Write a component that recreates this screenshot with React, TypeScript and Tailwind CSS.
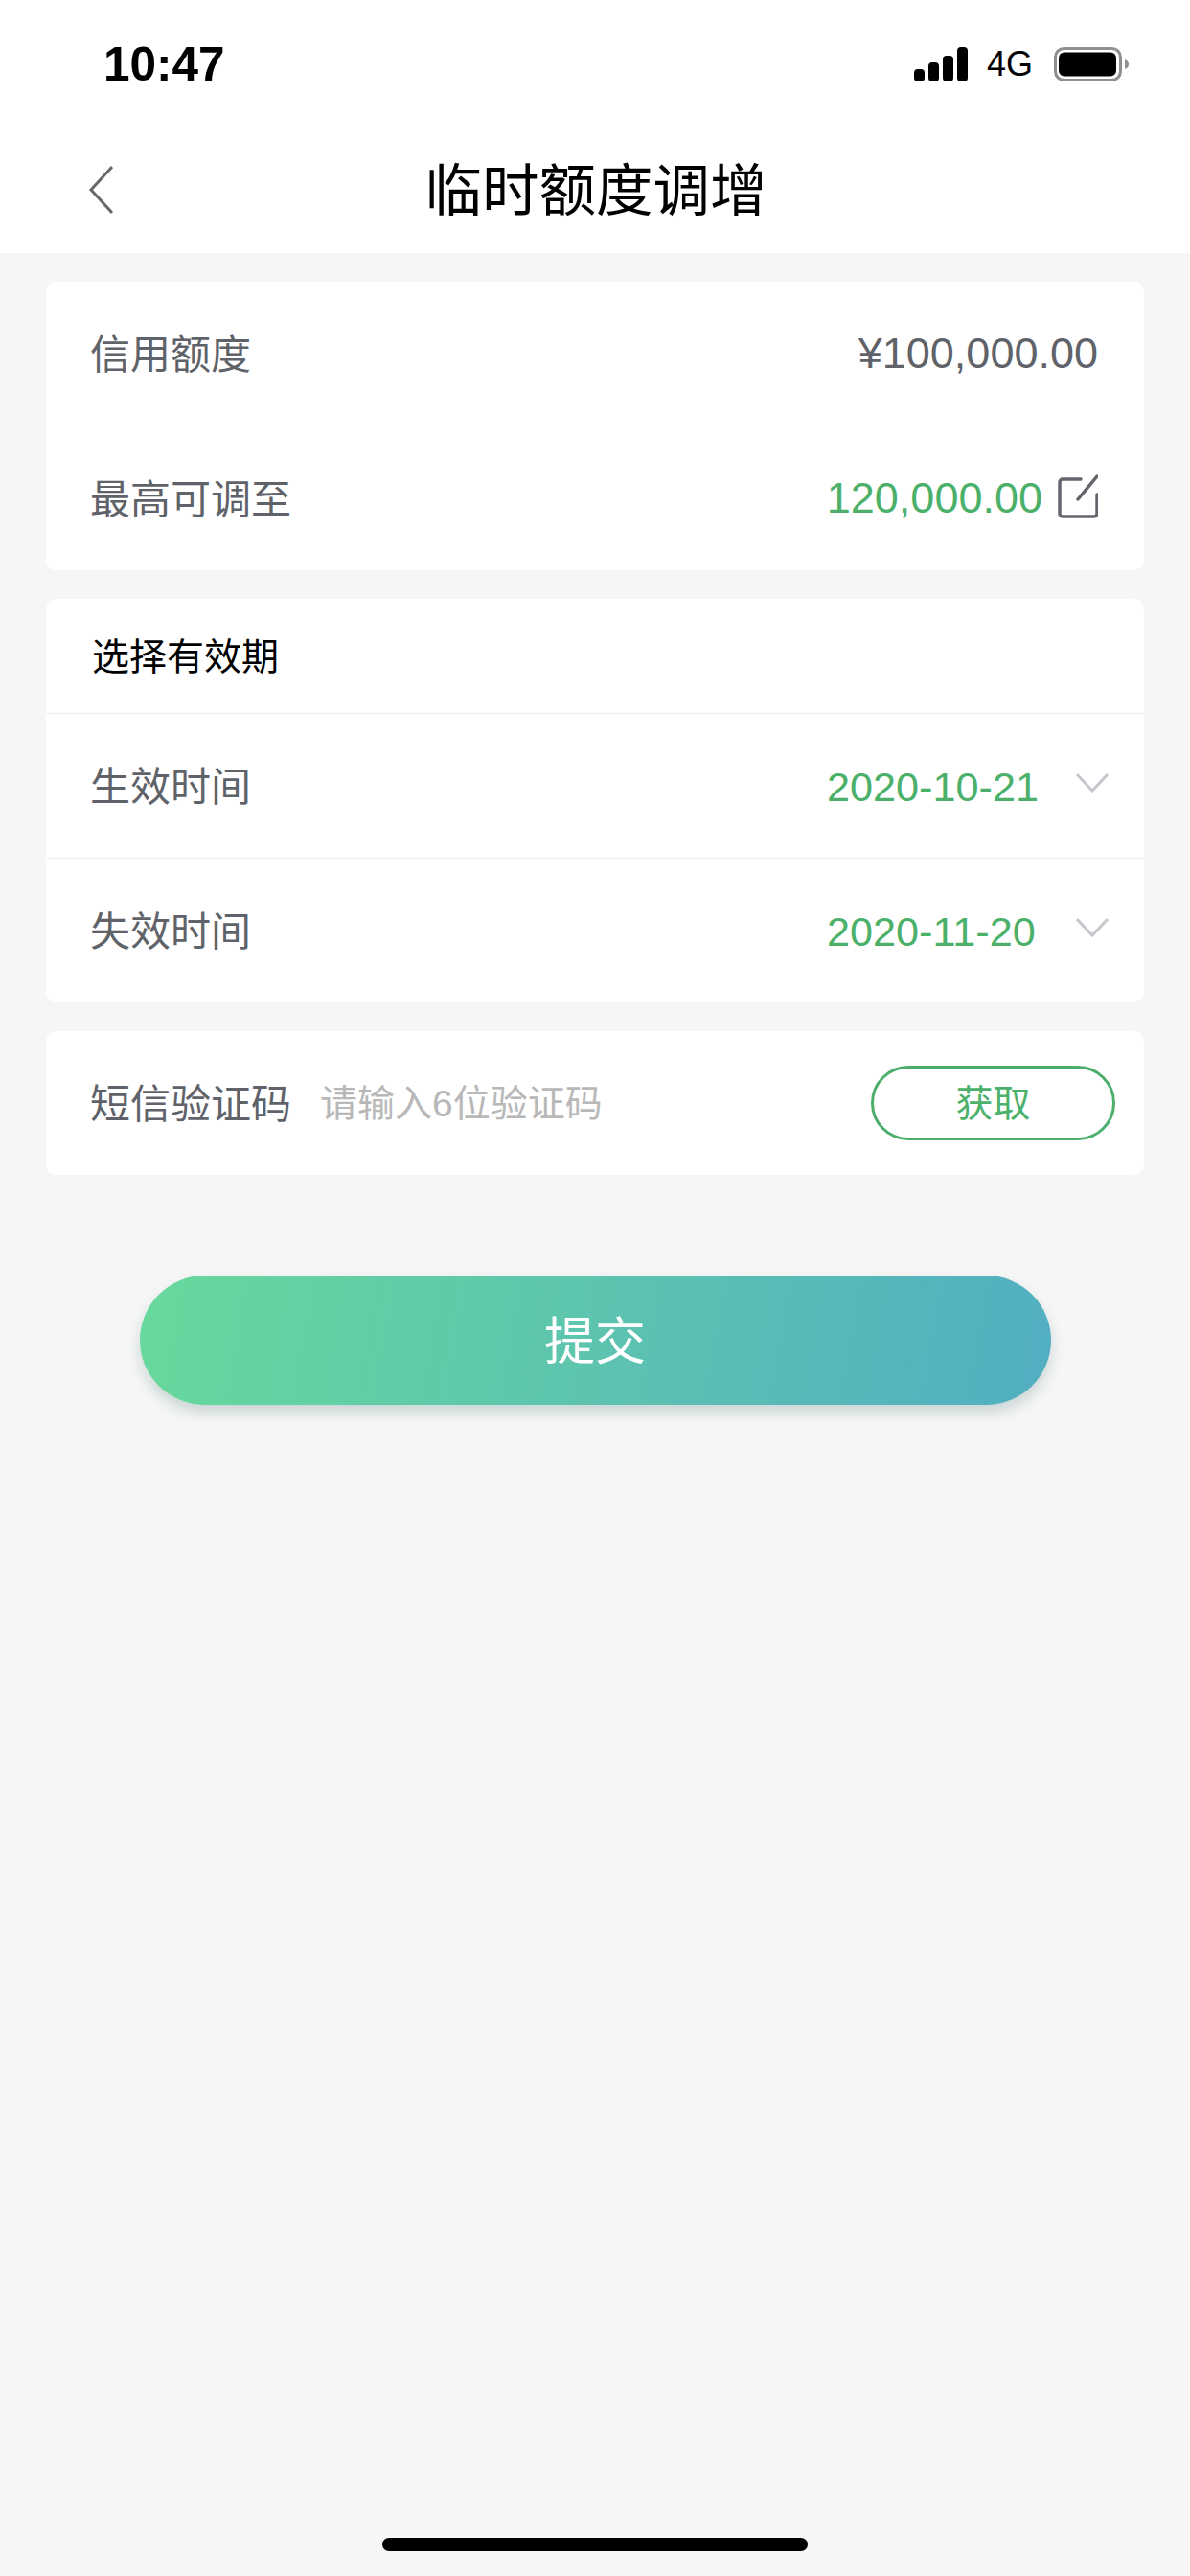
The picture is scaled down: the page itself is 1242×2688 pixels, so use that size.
const sans = "font-['Liberation_Sans','Noto_Sans_CJK_SC',sans-serif]";

function StatusBar() {
  return (
    <div className="flex h-[132px] items-center justify-between pl-[108px] pr-[64px] pt-[2px]">
      <span className="text-[49.500px] leading-none font-bold text-black">10:47</span>
      <div className="flex items-center">
        <svg width="56" height="36" viewBox="0 0 56 36" fill="#000">
          <rect x="0" y="23" width="11" height="13" rx="4" />
          <rect x="15" y="16" width="11" height="20" rx="4" />
          <rect x="30" y="9" width="11" height="27" rx="4" />
          <rect x="45" y="0" width="11" height="36" rx="4" />
        </svg>
        <span className="ml-[20px] text-[36px] leading-none text-black">4G</span>
        <svg className="ml-[22px]" width="78" height="36" viewBox="0 0 78 36">
          <rect x="1.500" y="1.500" width="68" height="33" rx="9" fill="none" stroke="#8f8f8f" strokeWidth="3" />
          <rect x="5" y="5.500" width="60" height="25" rx="6" fill="#000" />
          <path d="M74 13c3 1 4 3 4 5s-1 4-4 5z" fill="#8f8f8f" />
        </svg>
      </div>
    </div>
  );
}

function Row({ label, value, green, children }: { label: string; value: string; green?: boolean; children?: React.ReactNode }) {
  return (
    <div className="flex h-[150px] items-center justify-between pl-[46px] pr-[48px]">
      <span className="mt-[3px] text-[42px] text-[#5f6369]">{label}</span>
      <div className="flex items-center">
        <span className={green ? 'text-[45px] text-[#4bb069]' : 'text-[45px] text-[#5f6369]'}>{value}</span>
        {children}
      </div>
    </div>
  );
}

function DateRow({ label, value }: { label: string; value: string }) {
  return (
    <div className="flex h-[150px] items-center pl-[46px] pr-[37px]">
      <span className="mt-[3px] text-[42px] text-[#5f6369]">{label}</span>
      <span className="ml-auto mt-[3px] w-[220px] whitespace-nowrap text-[43.200px] leading-none text-[#4bb069]">{value}</span>
      <svg className="mb-[6px] ml-[40px]" width="34" height="22" viewBox="0 0 34 22" fill="none" stroke="#c6c8cd" strokeWidth="3">
        <path d="M1 2 17 19 33 2" />
      </svg>
    </div>
  );
}

export default function App() {
  return (
    <div className={`${sans} flex min-h-[2688px] flex-col bg-[#f6f6f6]`}>
      <div className="bg-white">
        <StatusBar />
        <div className="relative flex h-[132px] items-center justify-center">
          <svg className="absolute left-[92px] top-[40px]" width="26" height="52" viewBox="0 0 26 52" fill="none" stroke="#66686c" strokeWidth="3">
            <path d="M25 2 3 26l22 24" />
          </svg>
          <h1 className="ml-[2px] mt-[3px] text-[59.500px] leading-none font-normal text-black">临时额度调增</h1>
        </div>
      </div>

      <div className="flex flex-col gap-[30px] px-[48px] pt-[30px]">
        <div className="rounded-[10px] bg-white">
          <Row label="信用额度" value="¥100,000.00" />
          <div className="h-px bg-[#eeeeee]" />
          <Row label="最高可调至" value="120,000.00" green>
            <svg className="mb-[5px] ml-[16px]" width="42" height="46" viewBox="0 0 42 46" fill="none" stroke="#63676d" strokeWidth="3.500" strokeLinecap="round">
              <path d="M24 5H5a3 3 0 0 0-3 3v33a3 3 0 0 0 3 3h33a3 3 0 0 0 3-3V21" />
              <path d="M21 26 41 2" />
            </svg>
          </Row>
        </div>

        <div className="rounded-[10px] bg-white">
          <div className="flex h-[120px] items-center border-b border-[#eeeeee] pl-[48px] pt-[3px] text-[39px] text-black">选择有效期</div>
          <DateRow label="生效时间" value="2020-10-21" />
          <div className="h-px bg-[#eeeeee]" />
          <DateRow label="失效时间" value="2020-11-20" />
        </div>

        <div className="flex h-[150px] items-center rounded-[10px] bg-white pl-[46px] pr-[30px]">
          <span className="mt-[3px] text-[42px] text-[#5f6369]">短信验证码</span>
          <span className="ml-[30px] mt-[3px] text-[39px] text-[#b8b8b8]">请输入6位验证码</span>
          <button className="ml-auto h-[78px] w-[255px] rounded-full border-[3px] border-[#4cae6a] text-[39px] leading-none text-[#4bb069]">获取</button>
        </div>
      </div>

      <div className="mt-[105px] flex justify-center">
        <button className="h-[135px] w-[951px] rounded-full bg-[linear-gradient(100deg,#68d99c,#52aec2)] pt-[3px] text-[53px] leading-none text-white shadow-[0_8px_14px_rgba(90,130,130,0.28)]">提交</button>
      </div>

      <div className="mt-auto flex justify-center pb-[26px]">
        <div className="h-[14px] w-[444px] rounded-full bg-black" />
      </div>
    </div>
  );
}
